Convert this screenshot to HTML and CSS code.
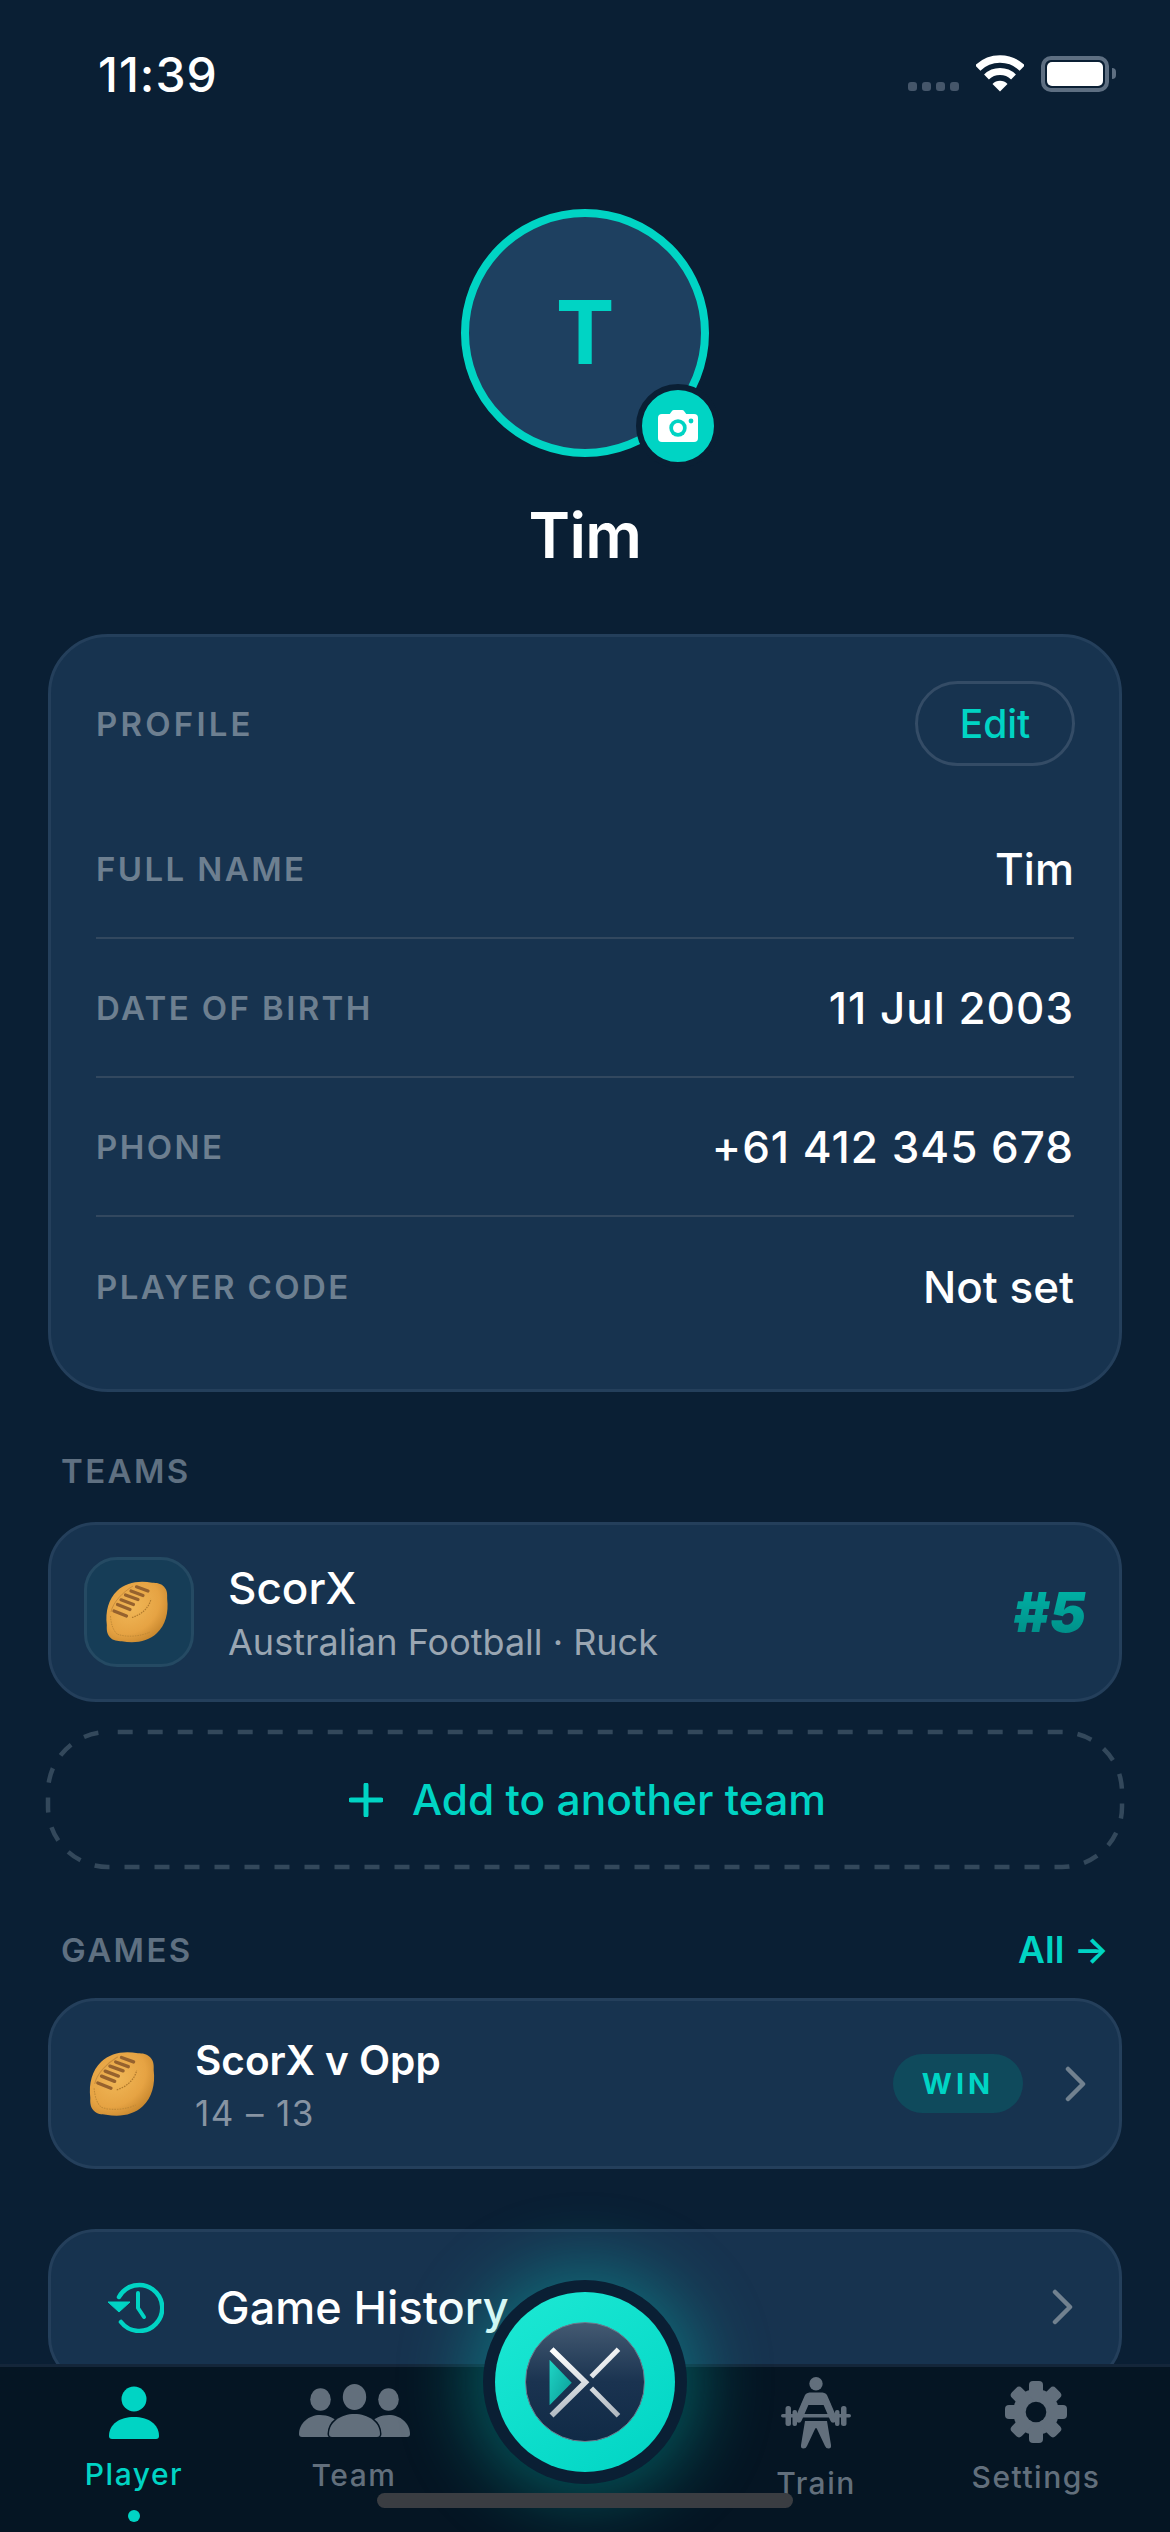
FILE: index.html
```html
<!DOCTYPE html>
<html lang="en">
<head>
<meta charset="utf-8">
<title>Player</title>
<link rel="stylesheet" href="styles.css">
</head>
<body>
<svg class="defs" width="0" height="0" aria-hidden="true">
  <defs>
    <radialGradient id="ballFill" cx=".5" cy=".38" r=".68">
      <stop offset="0" stop-color="#f0b757"/>
      <stop offset=".6" stop-color="#e6a343"/>
      <stop offset="1" stop-color="#bf7f28"/>
    </radialGradient>
    <linearGradient id="metal" x1="0" y1="0" x2="0" y2="1">
      <stop offset="0" stop-color="#ffffff"/>
      <stop offset="1" stop-color="#b4bcc4"/>
    </linearGradient>
    <linearGradient id="metal2" gradientUnits="userSpaceOnUse" x1="390" y1="260" x2="480" y2="470">
      <stop offset="0" stop-color="#ffffff"/>
      <stop offset="1" stop-color="#aeb6be"/>
    </linearGradient>
    <linearGradient id="play" x1="0" y1="0" x2="1" y2="1">
      <stop offset="0" stop-color="#1fd6c6"/>
      <stop offset="1" stop-color="#0a9a96"/>
    </linearGradient>
    <symbol id="ball" viewBox="0 0 80 80">
      <path transform="rotate(-43 40 40)" d="M3 40 C3 35 6 32 9 29 C17 18 28 11 40 11 C52 11 63 18 71 29 C74 32 77 35 77 40 C77 45 74 48 71 51 C63 62 52 69 40 69 C28 69 17 62 9 51 C6 48 3 45 3 40 Z" fill="url(#ballFill)"/>
      <path d="M14 40 C16 30 26 20 36 14" fill="none" stroke="#a9722f" stroke-width="1" opacity=".5"/>
      <g stroke="#96622e" stroke-width="3.200" stroke-linecap="round">
        <path d="M39.500 14.800 L51 19"/>
        <path d="M34 19 L46 23.500"/>
        <path d="M28.500 23 L41 27.500"/>
        <path d="M24 27.800 L36.500 32.500"/>
        <path d="M20.500 32.500 L33 37.500"/>
        <path d="M17 39 L29.500 44"/>
      </g>
      <path d="M35 45.500 C44 43 52 36 54 27" fill="none" stroke="#b07a2e" stroke-width="1.200" stroke-dasharray="1.500 1"/>
      <path d="M13.500 44 C14 52 16 58 20 62 C30 66 45 64 53 60" fill="none" stroke="#b98433" stroke-width="1" stroke-dasharray="1.500 1" opacity=".8"/>
    </symbol>
    <symbol id="chev" viewBox="0 0 22 36">
      <path d="M3 3 L18 18 L3 33" fill="none" stroke="#71818f" stroke-width="4.500" stroke-linecap="round" stroke-linejoin="round"/>
    </symbol>
  </defs>
</svg>

<div class="app">
  <header class="status">
    <span class="time">11:39</span>
    <div class="status-icons">
      <div class="signal"><i></i><i></i><i></i><i></i></div>
      <svg class="wifi" width="48" height="37" viewBox="0 0 48 37">
        <path d="M1.800 13 A32 32 0 0 1 46.200 13" fill="none" stroke="#fff" stroke-width="7.500"/>
        <path d="M10.500 22 A19.500 19.500 0 0 1 37.500 22" fill="none" stroke="#fff" stroke-width="7"/>
        <path d="M24 36.500 L16.500 29 A10.500 10.500 0 0 1 31.500 29 Z" fill="#fff"/>
      </svg>
      <div class="battery"><div class="battery-fill"></div></div>
      <div class="battery-nub"></div>
    </div>
  </header>

  <main class="content">
    <section class="hero">
      <div class="avatar">
        <span class="avatar-letter">T</span>
        <div class="badge">
          <svg width="40" height="32" viewBox="0 0 40 32">
            <path d="M11 5 L14 1 Q14.500 0 16 0 H24 Q25.500 0 26 1 L29 5 Z" fill="#fff"/>
            <rect y="4" width="40" height="28" rx="4" fill="#fff"/>
            <circle cx="20" cy="18" r="8.700" fill="#00d4c4"/>
            <circle cx="20" cy="18" r="5" fill="#fff"/>
            <circle cx="33" cy="11" r="2.400" fill="#00d4c4"/>
          </svg>
        </div>
      </div>
      <h1 class="name">Tim</h1>
    </section>

    <section class="card profile">
      <div class="profile-head">
        <span class="label profile-label">PROFILE</span>
        <button class="edit">Edit</button>
      </div>
      <div class="row"><span class="label">FULL NAME</span><span class="value">Tim</span></div>
      <div class="row"><span class="label">DATE OF BIRTH</span><span class="value value-num">11 Jul 2003</span></div>
      <div class="row"><span class="label">PHONE</span><span class="value value-num">+61 412 345 678</span></div>
      <div class="row"><span class="label">PLAYER CODE</span><span class="value">Not set</span></div>
    </section>

    <div class="section-head teams-head"><span class="label section-label">TEAMS</span></div>
    <section class="card team">
      <div class="team-icon"><svg width="80" height="80"><use href="#ball"/></svg></div>
      <div class="team-text">
        <div class="team-name">ScorX</div>
        <div class="team-sub">Australian Football · Ruck</div>
      </div>
      <span class="jersey">#5</span>
    </section>

    <button class="add">
      <svg class="add-border" width="1080" height="141" viewBox="0 0 1080 141">
        <rect x="3" y="3" width="1074" height="135" rx="60" fill="none" stroke="#33485b" stroke-width="4.500" stroke-dasharray="15 15" stroke-dashoffset="-9.700"/>
      </svg>
      <svg width="34" height="34" viewBox="0 0 34 34"><path d="M17 2 V32 M2 17 H32" stroke="#00d4c4" stroke-width="5" stroke-linecap="round"/></svg>
      <span>Add to another team</span>
    </button>

    <div class="section-head games-head"><span class="label section-label">GAMES</span><span class="all">All →</span></div>
    <section class="card game">
      <svg class="game-ball" width="84" height="84"><use href="#ball"/></svg>
      <div class="game-text">
        <div class="game-name">ScorX v Opp</div>
        <div class="game-sub">14 – 13</div>
      </div>
      <span class="win">WIN</span>
      <svg class="chev" width="22" height="36"><use href="#chev"/></svg>
    </section>

    <section class="card history">
      <svg class="history-icon" width="56" height="52" viewBox="0 0 56 52">
        <path d="M11 16 A23 23 0 1 1 13 41" fill="none" stroke="#00d4c4" stroke-width="4.500" stroke-linecap="round"/>
        <path d="M0 21 H22 L11 31 Z" fill="#00d4c4" stroke="#00d4c4" stroke-width="1" stroke-linejoin="round"/>
        <path d="M30 12 V27 L36 36" fill="none" stroke="#00d4c4" stroke-width="4" stroke-linecap="round" stroke-linejoin="round"/>
      </svg>
      <span class="history-title">Game History</span>
      <svg class="chev" width="22" height="36"><use href="#chev"/></svg>
    </section>
  </main>

  <nav class="tabbar">
    <a class="tab tab-player">
      <svg width="50" height="53" viewBox="0 0 50 53">
        <circle cx="25" cy="13" r="12.500" fill="currentColor"/>
        <path d="M3 53 A3 3 0 0 1 0 50 C0 38 11 31 25 31 S50 38 50 50 A3 3 0 0 1 47 53 Z" fill="currentColor"/>
      </svg>
      <span>Player</span>
      <i class="tab-dot"></i>
    </a>
    <a class="tab tab-team">
      <svg width="111" height="53" viewBox="0 0 111 53">
        <ellipse cx="21.500" cy="15.500" rx="10.300" ry="11.300" fill="currentColor"/>
        <ellipse cx="55.500" cy="13" rx="11.700" ry="13" fill="currentColor"/>
        <ellipse cx="89.500" cy="15.500" rx="10.300" ry="11.300" fill="currentColor"/>
        <path d="M3 53 A3 3 0 0 1 0 50 C0 39 10 31 21 31 C29 31 36 34 40 40 L30 53 Z" fill="currentColor"/>
        <path d="M108 53 A3 3 0 0 0 111 50 C111 39 101 31 90 31 C82 31 75 34 71 40 L81 53 Z" fill="currentColor"/>
        <path d="M33 53 A3 3 0 0 1 30 50 C30 38 42 30 55.500 30 S81 38 81 50 A3 3 0 0 1 78 53 Z" fill="currentColor" stroke="#051523" stroke-width="3" paint-order="stroke"/>
      </svg>
      <span>Team</span>
    </a>
    <div class="tab-gap"></div>
    <a class="tab tab-train">
      <svg width="70" height="72" viewBox="0 0 70 72">
        <circle cx="35" cy="6.700" r="6.700" fill="currentColor"/>
        <path d="M28.500 15.500 H41.500 Q43.500 15.500 44.500 17.500 L50 28 H20 L25.500 17.500 Q26.500 15.500 28.500 15.500 Z" fill="currentColor"/>
        <path d="M27 20 L17.500 42 M43 20 L52.500 42" stroke="currentColor" stroke-width="7" stroke-linecap="round"/>
        <rect x="0" y="37" width="70" height="3.600" rx="1.800" fill="currentColor"/>
        <rect x="4.500" y="29" width="5.500" height="20" rx="2.500" fill="currentColor"/>
        <rect x="60" y="29" width="5.500" height="20" rx="2.500" fill="currentColor"/>
        <rect x="11.500" y="33" width="4.500" height="16" rx="2" fill="currentColor"/>
        <rect x="54" y="33" width="4.500" height="16" rx="2" fill="currentColor"/>
        <path d="M24 44 H46 L50 68 Q50.500 71.500 47.500 71.500 Q45 71.500 44 69 L36 52 Q35 50 34 52 L26 69 Q25 71.500 22.500 71.500 Q19.500 71.500 20 68 Z" fill="currentColor"/>
      </svg>
      <span>Train</span>
    </a>
    <a class="tab tab-settings">
      <svg width="62" height="62" viewBox="0 0 62 62">
        <g fill="currentColor">
          <circle cx="31" cy="31" r="23"/>
          <rect x="24" y="0" width="14" height="62" rx="4"/>
          <rect x="24" y="0" width="14" height="62" rx="4" transform="rotate(45 31 31)"/>
          <rect x="24" y="0" width="14" height="62" rx="4" transform="rotate(90 31 31)"/>
          <rect x="24" y="0" width="14" height="62" rx="4" transform="rotate(135 31 31)"/>
        </g>
        <circle cx="31" cy="31" r="10.300" fill="#051523"/>
      </svg>
      <span>Settings</span>
    </a>
    <button class="fab">
      <span class="fab-core">
        <span class="fab-inner">
          <svg width="118" height="118" viewBox="197 187 356 356">
            <path d="M268 298 L335 367 L268 435 Z" fill="url(#play)"/>
            <path d="M274 266 L376 366 L274 466" fill="none" stroke="url(#metal)" stroke-width="17" stroke-linejoin="miter"/>
            <path d="M394 349 L476 266" fill="none" stroke="url(#metal2)" stroke-width="15"/>
            <path d="M394 384 L476 467" fill="none" stroke="url(#metal2)" stroke-width="15"/>
          </svg>
        </span>
      </span>
    </button>
    <div class="home-bar"></div>
  </nav>
</div>
</body>
</html>
```

FILE: styles.css
```css
* { box-sizing: border-box; }
html, body { margin: 0; padding: 0; }
body {
  width: 1170px;
  height: 2532px;
  overflow: hidden;
  background: #0a1f34;
  color: #fff;
  font-family: Inter, "Liberation Sans", sans-serif;
}
.defs { position: absolute; }
button { font-family: inherit; padding: 0; background: none; border: 0; color: inherit; }

.app { display: flex; flex-direction: column; height: 2532px; }

/* status bar */
.status {
  flex: none;
  height: 120px;
  display: flex;
  justify-content: space-between;
  padding: 50px 0 0 98px;
}
.time { font-size: 48px; line-height: 50px; font-weight: 500; letter-spacing: 1px; }
.status-icons { display: flex; align-items: flex-start; padding-right: 54px; }
.signal { display: flex; gap: 5px; margin: 32px 17px 0 0; }
.signal i { width: 9px; height: 9px; border-radius: 3px; background: #45566a; }
.wifi { margin: 5px 17px 0 0; }
.battery {
  width: 68px; height: 36px; margin-top: 6px;
  border: 4px solid #5e6f82; border-radius: 10px;
  padding: 2px;
}
.battery-fill { width: 100%; height: 100%; background: #fff; border-radius: 5px; }
.battery-nub { width: 4px; height: 11px; margin: 18px 0 0 3px; background: #5e6f82; border-radius: 0 4px 4px 0; }

/* main */
.content { flex: 1; min-height: 0; overflow: hidden; padding: 0 48px; }
.hero { display: flex; flex-direction: column; align-items: center; padding-top: 89px; }
.avatar {
  position: relative;
  width: 248px; height: 248px;
  border-radius: 50%;
  border: 8px solid #00d4c4;
  background: #1e4060;
  display: flex; align-items: center; justify-content: center;
}
.avatar-letter { font-size: 88px; font-weight: 700; color: #00d4c4; line-height: 1; margin-top: -3px; }
.badge {
  position: absolute;
  left: 167px; top: 167px;
  width: 84px; height: 84px;
  border-radius: 50%;
  border: 6px solid #0a1f34;
  background: #00d4c4;
  display: flex; align-items: center; justify-content: center;
}
.name { margin: 42px 0 0; font-size: 63px; line-height: 72px; font-weight: 600; letter-spacing: -.6px; }

.card {
  background: #17334f;
  border: 3px solid #243f5b;
}
.profile { margin-top: 63px; height: 758px; border-radius: 60px; padding: 44px 45px 0; }
.profile-head { display: flex; justify-content: space-between; align-items: center; height: 85px; margin-bottom: 34px; }
.label { font-size: 33px; line-height: 40px; font-weight: 600; letter-spacing: 2.400px; color: #6d7f90; }
.profile-label { letter-spacing: 3.200px; }
.edit {
  width: 160px; height: 85px; margin-right: -1px;
  border: 3px solid #344c66; border-radius: 43px;
  color: #00d4c4; font-size: 39px; font-weight: 500;
}
.row { display: flex; justify-content: space-between; align-items: center; height: 139px; border-bottom: 2px solid #32485f; }
.row:last-child { border-bottom: 0; }
.value { font-size: 44px; font-weight: 500; }
.value-num { letter-spacing: 1px; }

.section-head { display: flex; justify-content: space-between; align-items: center; padding: 0 13px 0 13px; }
.section-label { color: #5f7081; }
.teams-head { margin-top: 59px; }
.team {
  margin-top: 31px; height: 180px; border-radius: 48px;
  display: flex; align-items: center; padding: 0 33px;
}
.team-icon {
  width: 110px; height: 110px; border-radius: 33px;
  background: #163d57; border: 3px solid #254a63;
  display: flex; align-items: center; justify-content: center;
}
.team-icon svg { margin-left: -4px; }
.team-text { flex: 1; margin-left: 34px; padding-top: 6px; }
.team-name { font-size: 44px; line-height: 50px; font-weight: 500; }
.team-sub { margin-top: 4px; font-size: 36px; line-height: 50px; color: #9aa6b2; }
.jersey {
  font-size: 55px; line-height: 56px; font-weight: 900; font-style: italic;
  background: linear-gradient(180deg, #00b5a8, #008b85);
  -webkit-background-clip: text; background-clip: text; color: transparent;
}
.add {
  position: relative;
  margin-top: 29px; width: 1074px; height: 137px;
  padding-left: 5px;
  display: flex; align-items: center; justify-content: center; gap: 29px;
  color: #00d4c4; font-size: 42.500px; font-weight: 500;
}
.add-border { position: absolute; left: -3px; top: -2px; }
.games-head { margin-top: 62px; }
.all { font-size: 37px; line-height: 40px; font-weight: 600; color: #00d4c4; }
.game {
  margin-top: 28px; height: 171px; border-radius: 48px;
  display: flex; align-items: center; padding: 0 32px 0 29px;
}
.game-text { flex: 1; margin-left: 31px; }
.game-name { margin-top: 6px; font-size: 40.500px; line-height: 50px; font-weight: 600; }
.game-sub { margin-top: 2px; font-size: 35px; line-height: 50px; color: #8794a3; letter-spacing: 1.400px; }
.win {
  width: 130px; height: 59px; border-radius: 30px;
  background: #0f4a5c; color: #00d4c4;
  display: flex; align-items: center; justify-content: center;
  font-size: 29px; font-weight: 700; letter-spacing: 4px;
}
.game .chev { margin-left: 42px; }
.history {
  margin-top: 60px; height: 156px; border-radius: 48px;
  display: flex; align-items: center; padding: 0 45px 0 57px;
}
.history-title { flex: 1; margin-left: 52px; font-size: 45px; font-weight: 500; }

/* tab bar */
.tabbar {
  flex: none;
  position: relative;
  height: 168px;
  background: #051523;
  border-top: 3px solid #14263a;
  display: grid;
  grid-template-columns: 220px 220px 1fr 220px 220px;
  padding: 0 24px;
  color: #626f7c;
}
.tab { display: flex; flex-direction: column; align-items: center; font-size: 30px; line-height: 36px; font-weight: 500; letter-spacing: 1.500px; }
.tab svg { display: block; flex: none; }
.tab-player { color: #00d4c4; padding-top: 19px; }
.tab-player svg { margin-bottom: 17px; }
.tab-team { padding-top: 17px; }
.tab-team svg { margin-bottom: 20px; }
.tab-train { padding-top: 10px; }
.tab-train svg { margin-bottom: 16px; }
.tab-settings { padding-top: 14px; }
.tab-settings svg { margin-bottom: 16px; }
.tab-dot { width: 12px; height: 12px; margin-top: 18px; border-radius: 50%; background: #00d4c4; }

.fab {
  position: absolute;
  left: 483px; top: -87px;
  width: 204px; height: 204px;
  border-radius: 50%;
  background: #0a1f34;
  box-shadow: 0 0 70px 14px rgba(0, 212, 196, .36);
  display: flex; align-items: center; justify-content: center;
}
.fab-core {
  width: 180px; height: 180px; border-radius: 50%;
  background: linear-gradient(145deg, #1de9d4, #00d4c4);
  display: flex; align-items: center; justify-content: center;
}
.fab-inner {
  width: 120px; height: 120px; border-radius: 50%;
  border: 1px solid #6c7c8e;
  background: linear-gradient(180deg, #445a72, #1a3350 50%, #102a46);
  display: flex; align-items: center; justify-content: center;
}
.home-bar {
  position: absolute;
  left: 377px; top: 126px;
  width: 416px; height: 15px;
  border-radius: 8px;
  background: #3a3d42;
}
```
